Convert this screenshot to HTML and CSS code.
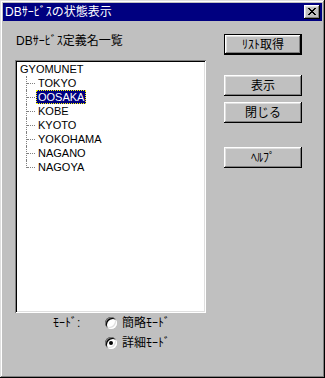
FILE: index.html
```html
<!DOCTYPE html>
<html>
<head>
  <meta charset="UTF-8">
  <title>DBｻｰﾋﾞｽの状態表示</title>
  <link rel="stylesheet" href="styles.css">
</head>
<body>
<div class="window">
  <div class="titlebar">
    <span class="title">DBｻｰﾋﾞｽの状態表示</span>
    <button class="close" type="button">
      <svg width="8" height="7" viewBox="0 0 8 7" shape-rendering="crispEdges">
        <path d="M0 0h2v1H0zM6 0h2v1H6zM1 1h2v1H1zM5 1h2v1H5zM2 2h4v1H2zM3 3h2v1H3zM2 4h4v1H2zM1 5h2v1H1zM5 5h2v1H5zM0 6h2v1H0zM6 6h2v1H6z" fill="#000"/>
      </svg>
    </button>
  </div>

  <div class="body">
    <div class="left">
      <div class="caption">DBｻｰﾋﾞｽ定義名一覧</div>
      <div class="tree">
        <div class="root">GYOMUNET</div>
        <ul class="children">
          <li><span class="item">TOKYO</span></li>
          <li><span class="item selected">OOSAKA</span></li>
          <li><span class="item">KOBE</span></li>
          <li><span class="item">KYOTO</span></li>
          <li><span class="item">YOKOHAMA</span></li>
          <li><span class="item">NAGANO</span></li>
          <li><span class="item">NAGOYA</span></li>
        </ul>
      </div>
      <div class="mode">
        <span class="mode-label">ﾓｰﾄﾞ:</span>
        <div class="radios">
          <label class="radio"><span class="mark"></span>簡略ﾓｰﾄﾞ</label>
          <label class="radio"><span class="mark checked"></span>詳細ﾓｰﾄﾞ</label>
        </div>
      </div>
    </div>

    <div class="buttons">
      <button class="btn default" type="button">ﾘｽﾄ取得</button>
      <button class="btn show" type="button">表示</button>
      <button class="btn close-btn" type="button">閉じる</button>
      <button class="btn help" type="button">ﾍﾙﾌﾟ</button>
    </div>
  </div>
</div>
</body>
</html>
```

FILE: styles.css
```css
html, body {
  margin: 0;
  padding: 0;
}
body {
  background: #c0c0c0;
  font-family: "Liberation Sans", "Noto Sans CJK JP", sans-serif;
  font-size: 12px;
  color: #000;
}
.window {
  width: 325px;
  height: 378px;
  box-sizing: border-box;
  padding: 3px;
  background: #c0c0c0;
  box-shadow: inset -1px -1px #000, inset 1px 1px #dfdfdf,
              inset -2px -2px #808080, inset 2px 2px #fff;
}

/* title bar */
.titlebar {
  height: 18px;
  background: #000080;
  display: flex;
  align-items: center;
  justify-content: space-between;
  padding: 0 2px;
}
.title {
  color: #fff;
  line-height: 14px;
}
.close {
  width: 16px;
  height: 14px;
  padding: 0;
  border: 0;
  background: #c0c0c0;
  display: flex;
  align-items: center;
  justify-content: center;
  box-shadow: inset -1px -1px #000, inset 1px 1px #fff,
              inset -2px -2px #808080, inset 2px 2px #dfdfdf;
}
.close svg {
  display: block;
  margin: 0 1px 1px 0;
}

/* content */
.body {
  display: flex;
  padding: 13px 0 0 12px;
}
.left {
  width: 191px;
}
.caption {
  height: 14px;
  line-height: 14px;
  padding-left: 1px;
  margin-bottom: 12px;
}

/* tree view */
.tree {
  width: 191px;
  height: 253px;
  box-sizing: border-box;
  background: #fff;
  padding: 2px 0 0 5px;
  font-size: 11px;
  line-height: 14px;
  box-shadow: inset 1px 1px #808080, inset -1px -1px #fff,
              inset 2px 2px #000, inset -2px -2px #dfdfdf;
}
.root {
  height: 14px;
}
.children {
  list-style: none;
  margin: 0;
  padding: 0;
}
.children li {
  position: relative;
  height: 14px;
  padding-left: 16px;
}
.children li::before {
  content: "";
  position: absolute;
  left: 7px;
  top: 7px;
  width: 8px;
  border-top: 1px dotted #808080;
}
.children li::after {
  content: "";
  position: absolute;
  left: 6px;
  top: 0;
  height: 14px;
  border-left: 1px dotted #808080;
}
.children li:last-child::after {
  height: 8px;
}
.item {
  display: inline-block;
  height: 14px;
  padding: 0 2px;
  box-sizing: border-box;
}
.item.selected {
  background: #000080;
  color: #fff;
  outline: 1px dotted #ffff00;
  outline-offset: -1px;
}

/* mode radios */
.mode {
  display: flex;
  margin-top: 3px;
  padding-left: 38px;
}
.mode-label {
  width: 52px;
  line-height: 14px;
}
.radios {
  display: flex;
  flex-direction: column;
  gap: 6px;
}
.radio {
  display: flex;
  align-items: center;
  gap: 5px;
  height: 14px;
  line-height: 14px;
  white-space: nowrap;
}
.mark {
  width: 12px;
  height: 12px;
  border-radius: 50%;
  background: #fff;
  display: grid;
  place-items: center;
  box-shadow: inset 1px 1px #808080, inset -1px -1px #fff,
              inset 2px 2px #000, inset -2px -2px #dfdfdf;
}
.mark.checked::after {
  content: "";
  width: 4px;
  height: 4px;
  border-radius: 50%;
  background: #000;
}

/* buttons */
.buttons {
  display: flex;
  flex-direction: column;
  margin-left: 18px;
}
.btn {
  width: 78px;
  height: 21px;
  padding: 0;
  border: 0;
  background: #c0c0c0;
  font: inherit;
  line-height: 14px;
  color: #000;
  box-shadow: inset -1px -1px #000, inset 1px 1px #fff,
              inset -2px -2px #808080, inset 2px 2px #dfdfdf;
}
.btn.default {
  box-shadow: inset 0 0 0 1px #000, inset -2px -2px #000, inset 2px 2px #fff,
              inset -3px -3px #808080, inset 3px 3px #dfdfdf;
}
.btn.show {
  margin-top: 20px;
}
.btn.close-btn {
  margin-top: 6px;
}
.btn.help {
  margin-top: 24px;
}
```
